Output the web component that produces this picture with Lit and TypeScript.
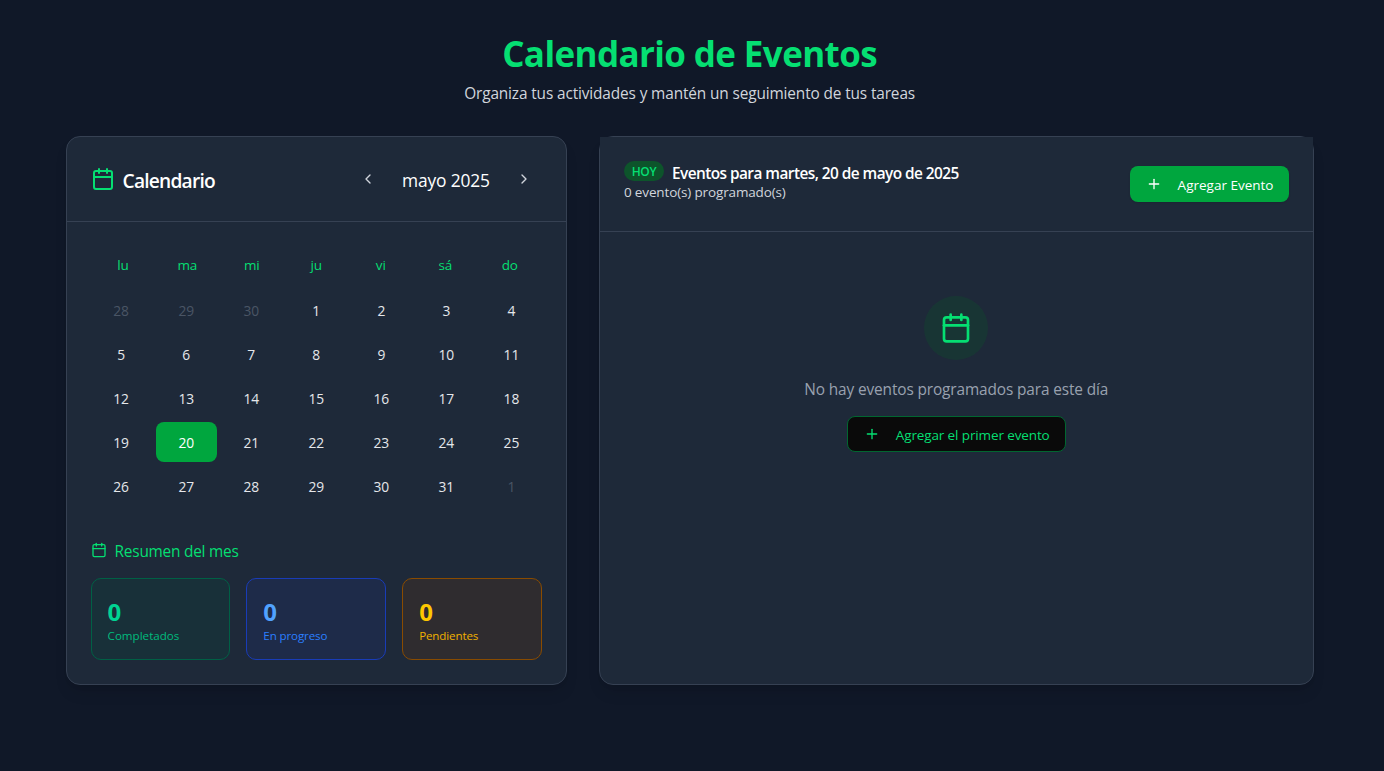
import { LitElement, html, css, svg } from "lit";
import { customElement } from "lit/decorators.js";
import { classMap } from "lit/directives/class-map.js";

const calendarPaths = svg`
  <path d="M8 2v4"></path>
  <path d="M16 2v4"></path>
  <rect width="18" height="18" x="3" y="4" rx="2"></rect>
  <path d="M3 10h18"></path>`;
const chevronLeft = svg`<path d="m15 18-6-6 6-6"></path>`;
const chevronRight = svg`<path d="m9 18 6-6-6-6"></path>`;
const plus = svg`<path d="M5 12h14"></path><path d="M12 5v14"></path>`;

const icon = (paths: unknown, size: number) => html`<svg
  class="icon"
  width=${size}
  height=${size}
  viewBox="0 0 24 24"
  fill="none"
  stroke="currentColor"
  stroke-width="2"
  stroke-linecap="round"
  stroke-linejoin="round"
>${paths}</svg>`;

interface Day {
  n: number;
  outside: boolean;
}

const weekdays = ["lu", "ma", "mi", "ju", "vi", "sá", "do"];
const days: Day[] = [
  ...[28, 29, 30].map((n) => ({ n, outside: true })),
  ...Array.from({ length: 31 }, (_, i) => ({ n: i + 1, outside: false })),
  { n: 1, outside: true },
];
const stats = [
  { kind: "done", label: "Completados", value: 0 },
  { kind: "progress", label: "En progreso", value: 0 },
  { kind: "pending", label: "Pendientes", value: 0 },
];

@customElement("app-root")
export class AppRoot extends LitElement {
  static styles = css`
    :host {
      display: block;
      box-sizing: border-box;
      min-height: 771px;
      background: #101828;
      color: #fff;
      font-family: "Segoe UI", "Open Sans", "Noto Sans", sans-serif;
      font-size: 15.4px;
      line-height: 24px;
    }
    * { box-sizing: border-box; margin: 0; }
    .icon { display: block; flex: none; }
    .page { width: 1248px; margin-left: 65.6px; padding-top: 32px; }
    .top { text-align: center; margin-bottom: 32px; padding-top: 2px; height: 72px; }
    .title { font-size: 35px; line-height: 40px; font-weight: 700; color: #05df72; letter-spacing: -0.62px; }
    .subtitle { margin-top: 8px; color: #d1d5dc; letter-spacing: -0.13px; }
    .columns { display: grid; grid-template-columns: 501.33px 1fr; gap: 32px; height: 549px; }
    .card {
      display: flex;
      flex-direction: column;
      background: #1e2939;
      border: 1px solid #364153;
      border-radius: 14px;
      box-shadow: 0 10px 15px -3px rgba(0, 0, 0, 0.1), 0 4px 6px -4px rgba(0, 0, 0, 0.1);
    }
    .cal-head {
      display: flex;
      justify-content: space-between;
      align-items: center;
      height: 85px;
      padding: 0 24px;
      border-bottom: 1px solid #364153;
    }
    .cal-title { display: flex; align-items: center; gap: 8px; color: #05df72; }
    .cal-name { color: #fff; font-size: 19.2px; font-weight: 600; padding-top: 3px; letter-spacing: -0.8px; }
    .month-nav { display: flex; align-items: center; justify-content: space-between; width: 192px; }
    .nav-btn {
      display: grid;
      place-items: center;
      width: 36px;
      height: 36px;
      padding: 0;
      border: 0;
      background: none;
      color: #d1d5dc;
    }
    .month { font-size: 17.4px; padding-top: 1px; letter-spacing: -0.15px; }
    .cal-body { flex: 1; padding: 31px 24px 24px; display: flex; flex-direction: column; }
    .weekdays { display: grid; grid-template-columns: repeat(7, 1fr); margin-bottom: 13px; }
    .weekday { text-align: center; font-size: 13.5px; color: #05df72; letter-spacing: -0.15px; }
    .days { display: grid; grid-template-columns: repeat(7, 1fr); gap: 4px; font-size: 13.8px; }
    .day {
      height: 40px;
      display: grid;
      place-items: center;
      padding-top: 2px;
      border-radius: 8px;
      color: #e5e7eb;
      letter-spacing: -0.1px;
    }
    .day.outside { color: #4a5565; }
    .day.selected { background: #00a63e; color: #fff; }
    .summary { display: flex; align-items: center; gap: 8px; height: 27px; margin-top: auto; color: #05df72; }
    .summary-text { padding-top: 4px; letter-spacing: -0.23px; }
    .stats { display: grid; grid-template-columns: repeat(3, 1fr); gap: 16px; margin-top: 15px; }
    .stat { height: 82px; padding: 16px; border: 1px solid; border-radius: 10px; }
    .stat-value { font-size: 24px; line-height: 32px; font-weight: 700; padding-top: 1px; height: 33px; }
    .stat-label { font-size: 11.6px; line-height: 16px; letter-spacing: -0.14px; }
    .done { background: rgba(0, 79, 59, 0.2); border-color: #006045; }
    .done .stat-value { color: #00d492; }
    .done .stat-label { color: #00bc7d; letter-spacing: 0; }
    .progress { background: rgba(28, 57, 142, 0.2); border-color: #193cb8; }
    .progress .stat-value { color: #51a2ff; }
    .progress .stat-label { color: #2b7fff; }
    .pending { background: rgba(115, 62, 10, 0.2); border-color: #894b00; }
    .pending .stat-value { color: #fdc700; }
    .pending .stat-label { color: #f0b100; }
    .ev-head {
      display: flex;
      justify-content: space-between;
      align-items: center;
      height: 95px;
      padding: 0 24px;
      background: #1e2939;
      border-bottom: 1px solid #364153;
    }
    .ev-info { height: 46px; }
    .ev-line { display: flex; gap: 8px; height: 20px; }
    .badge {
      width: 40px;
      height: 20px;
      border-radius: 10px;
      background: #0d542b;
      color: #05df72;
      font-size: 12px;
      font-weight: 600;
      line-height: 21px;
      text-align: center;
      letter-spacing: -0.4px;
    }
    .ev-title { font-size: 15.4px; font-weight: 600; line-height: 25px; letter-spacing: -0.55px; }
    .ev-count { font-size: 13.5px; line-height: 23px; color: #d1d5dc; letter-spacing: -0.14px; }
    .btn {
      display: flex;
      align-items: center;
      gap: 16px;
      height: 36px;
      padding: 0 16px;
      border: 0;
      border-radius: 8px;
      font: inherit;
      font-size: 13.5px;
      white-space: nowrap;
    }
    .btn-text { padding-top: 2px; }
    .btn.primary {
      width: 159px;
      background: #00a63e;
      color: #fff;
      box-shadow: 0 1px 2px rgba(0, 0, 0, 0.1);
    }
    .btn.outline {
      width: 219px;
      margin-top: 14px;
      background: #0a0a0a;
      color: #05df72;
      border: 1px solid #016630;
      letter-spacing: -0.12px;
    }
    .empty { display: flex; flex-direction: column; align-items: center; padding-top: 64px; }
    .bubble {
      display: grid;
      place-items: center;
      width: 64px;
      height: 64px;
      border-radius: 50%;
      background: rgba(13, 84, 43, 0.3);
      color: #05df72;
    }
    .empty-text { margin-top: 18px; color: #99a1af; letter-spacing: -0.12px; }
  `;

  render() {
    return html`
      <main class="page">
        <header class="top">
          <h1 class="title">Calendario de Eventos</h1>
          <p class="subtitle">Organiza tus actividades y mantén un seguimiento de tus tareas</p>
        </header>
        <div class="columns">
          <section class="card">
            <div class="cal-head">
              <div class="cal-title">${icon(calendarPaths, 24)}<h2 class="cal-name">Calendario</h2></div>
              <div class="month-nav">
                <button class="nav-btn" aria-label="Mes anterior">${icon(chevronLeft, 16)}</button>
                <span class="month">mayo 2025</span>
                <button class="nav-btn" aria-label="Mes siguiente">${icon(chevronRight, 16)}</button>
              </div>
            </div>
            <div class="cal-body">
              <div class="weekdays">${weekdays.map((w) => html`<span class="weekday">${w}</span>`)}</div>
              <div class="days">
                ${days.map(
                  (d) => html`<span
                    class=${classMap({ day: true, outside: d.outside, selected: !d.outside && d.n === 20 })}
                  >${d.n}</span>`
                )}
              </div>
              <div class="summary">${icon(calendarPaths, 16)}<span class="summary-text">Resumen del mes</span></div>
              <div class="stats">
                ${stats.map(
                  (s) => html`<div class="stat ${s.kind}">
                    <div class="stat-value">${s.value}</div>
                    <div class="stat-label">${s.label}</div>
                  </div>`
                )}
              </div>
            </div>
          </section>
          <section class="card">
            <div class="ev-head">
              <div class="ev-info">
                <div class="ev-line">
                  <span class="badge">HOY</span>
                  <h2 class="ev-title">Eventos para martes, 20 de mayo de 2025</h2>
                </div>
                <p class="ev-count">0 evento(s) programado(s)</p>
              </div>
              <button class="btn primary">${icon(plus, 16)}<span class="btn-text">Agregar Evento</span></button>
            </div>
            <div class="empty">
              <div class="bubble">${icon(calendarPaths, 32)}</div>
              <p class="empty-text">No hay eventos programados para este día</p>
              <button class="btn outline">${icon(plus, 16)}<span class="btn-text">Agregar el primer evento</span></button>
            </div>
          </section>
        </div>
      </main>
    `;
  }
}
